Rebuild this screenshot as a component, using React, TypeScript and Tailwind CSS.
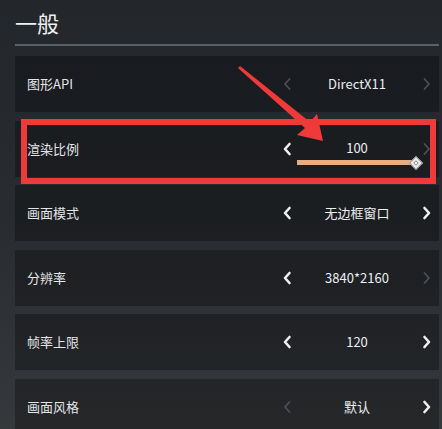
import React from 'react'

type Row = {
  label: string
  value: string
  left: boolean
  right: boolean
  slider?: boolean
}

const rows: Row[] = [
  { label: '图形API', value: 'DirectX11', left: false, right: false },
  { label: '渲染比例', value: '100', left: true, right: false, slider: true },
  { label: '画面模式', value: '无边框窗口', left: true, right: true },
  { label: '分辨率', value: '3840*2160', left: true, right: false },
  { label: '帧率上限', value: '120', left: true, right: true },
  { label: '画面风格', value: '默认', left: false, right: true },
]

function Chevron({ dir, active }: { dir: 'left' | 'right'; active: boolean }) {
  return (
    <svg width="10" height="14" viewBox="0 0 10 14" className={active ? 'text-[#eef0f2]' : 'text-[#4b4f56]'}>
      <path
        d={dir === 'left' ? 'M7.5 2 L3 7 L7.5 12' : 'M2.5 2 L7 7 L2.5 12'}
        fill="none"
        stroke="currentColor"
        strokeWidth={active ? 2.6 : 1.8}
        strokeLinecap="round"
        strokeLinejoin="round"
      />
    </svg>
  )
}

function SettingRow({ row }: { row: Row }) {
  return (
    <div className="relative flex h-[56px] items-center bg-black/30 pl-3">
      <span className="flex-1 text-[13px] text-[#e2e4e6]">{row.label}</span>
      <div className="flex w-[159px] items-center pl-[2px] pr-[7px]">
        <Chevron dir="left" active={row.left} />
        <div className="relative flex flex-1 justify-center">
          <span className={`text-[13px] text-[#eceef0] ${row.slider ? '-mt-[2px]' : ''}`}>{row.value}</span>
        </div>
        <Chevron dir="right" active={row.right} />
      </div>
      {row.slider && (
        <div className="absolute left-[282px] top-[37px] flex w-[124px] items-center">
          <div className="h-[5px] flex-1 bg-[#e6ad85]" />
          <div className="-ml-[6px] flex h-[10px] w-[10px] rotate-45 items-center justify-center border border-[#8f8f8f] bg-[#ececec]">
            <div className="h-[4px] w-[4px] border border-[#8f8f8f] bg-white" />
          </div>
        </div>
      )}
      {row.slider && (
        <div className="pointer-events-none absolute -bottom-[7px] left-[6px] right-[3px] -top-[2px] border-[6px] border-[#f03a3a]" />
      )}
    </div>
  )
}

export default function App() {
  return (
    <div
      className="relative h-[429px] w-[442px] overflow-hidden bg-gradient-to-b from-[#23272c] via-[#282b30] to-[#36393c] pl-[15px] pr-[3px]"
      style={{ fontFamily: '"Noto Sans CJK SC", "Noto Sans", sans-serif' }}
    >
      <div className="flex h-[44px] items-center">
        <h1 className="text-[22px] leading-none text-[#eef0f2]">一般</h1>
      </div>
      <div className="h-[2px] bg-[#5b6067]" />
      <div className="mt-[10px] flex flex-col gap-[8.5px]">
        {rows.map((row) => (
          <SettingRow key={row.label} row={row} />
        ))}
      </div>
      <svg className="pointer-events-none absolute left-0 top-0" width="442" height="429">
        <polygon points="240,66 310,122 317,114 323,141 297,135 305,128 238,68" fill="#f03a3a" />
      </svg>
    </div>
  )
}
